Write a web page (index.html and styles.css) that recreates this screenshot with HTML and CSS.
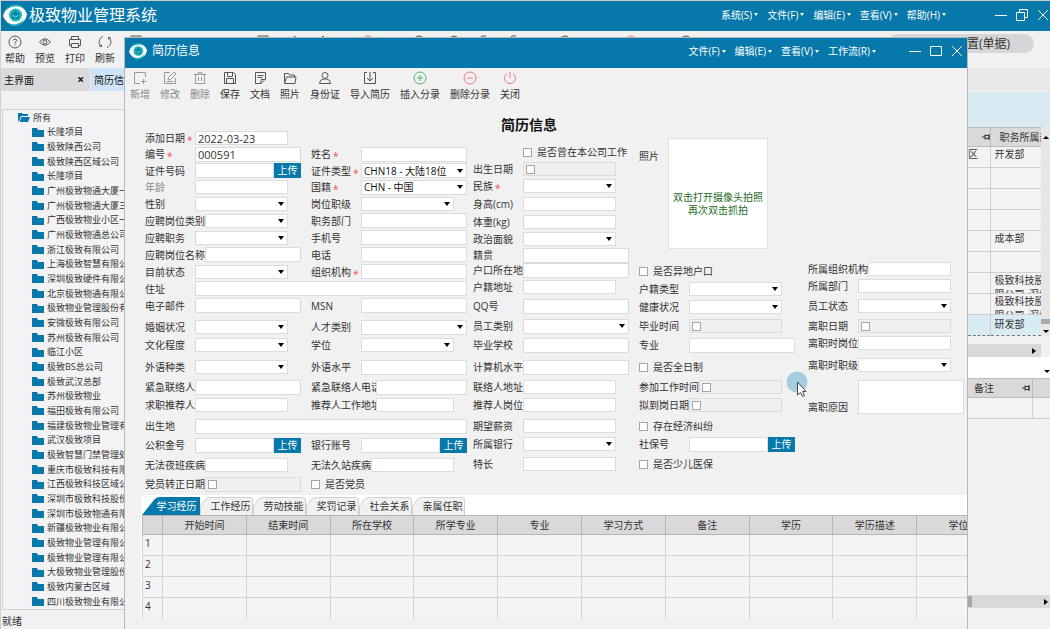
FILE: index.html
```html
<!DOCTYPE html>
<html lang="zh-CN">
<head>
<meta charset="utf-8">
<title>极致物业管理系统</title>
<link rel="stylesheet" href="styles.css">
</head>
<body>
<svg class="defs" aria-hidden="true">
  <symbol id="logo" viewBox="0 0 24 24">
    <path d="M0 13C2 6 7 2 13 2c5 0 9 4 11 9-1 7-6 11-12 11C6 22 2 18 0 13z" fill="#fff"/>
    <path d="M3 5C7 1 14 0 19 3l1 2C14 2 8 3 3 7z" fill="#1aa5ae"/>
    <path d="M5 20c6 3 12 1 16-4-2 7-11 10-16 4z" fill="#1ab4b4"/>
    <circle cx="12.500" cy="12" r="6.500" fill="#1fb9ba"/>
    <path d="M7.500 11.500l5-4.500 5 4.500h-1.500V16h-7v-4.500z" fill="#0b87ac"/>
    <path d="M10.500 12v1q2 2 4 0v-1" fill="none" stroke="#7fe0dd"/>
  </symbol>
  <symbol id="folder" viewBox="0 0 12 11"><path d="M0 1h5l1 2h6v7H0z" fill="#0678a9"/></symbol>
  <symbol id="pin" viewBox="0 0 8 6"><path d="M0 3h3M3 .5v5M3 1.500h4v3H3M7 0v6" fill="none" stroke="#333"/></symbol>
</svg>

<div class="app">
  <header class="app-bar">
    <svg class="app-logo"><use href="#logo"/></svg>
    <h1>极致物业管理系统</h1>
    <nav class="menu">
      <button>系统(S)</button><button>文件(F)</button><button>编辑(E)</button><button>查看(V)</button><button>帮助(H)</button>
    </nav>
    <div class="win-buttons app-win">
      <button aria-label="最小化"><svg viewBox="0 0 14 14"><path d="M1 7.500h12"/></svg></button>
      <button aria-label="还原"><svg viewBox="0 0 14 14"><path d="M1.500 4.500h8v8h-8zM4.500 4V1.500h8v8H10"/></svg></button>
      <button aria-label="关闭"><svg viewBox="0 0 14 14"><path d="M2 2l10 10M12 2L2 12"/></svg></button>
    </div>
  </header>

  <div class="app-tools tools">
    <button><svg viewBox="0 0 14 14"><circle cx="7" cy="7" r="6"/><path d="M5.200 5.500Q5.300 4 7 4t1.800 1.500Q8.800 6.500 7 7.300V8.500M7 9.500v1"/></svg>帮助</button>
    <button><svg viewBox="0 0 14 14"><path d="M1.500 7Q7 .5 12.500 7 7 13.500 1.500 7z"/><circle cx="7" cy="7" r="2"/></svg>预览</button>
    <button><svg viewBox="0 0 14 14"><path d="M3.500 4.500v-3h7v3M3.500 10.500h-2v-6h11v6h-2M3.500 8.500h7v4h-7z"/></svg>打印</button>
    <button><svg viewBox="0 0 14 14"><path d="M5 1.500A6 6 0 0 0 3 11.500M1.500 11.500h2v-2M9 12.500A6 6 0 0 0 11 2.500M12.500 2.500h-2v2"/></svg>刷新</button>
    <svg class="tool-strip" viewBox="5 0 620 14" fill="none" stroke="#555">
      <path d="M11 5V1h10v4M138 5V1h10v4M168 3h5l2-2v4M200 4l3-3 3 3M359 4l3-3h4M389 4l3-3h4"/>
      <g stroke="#e77"><circle cx="248" cy="7" r="6"/><circle cx="511" cy="7" r="6"/></g>
      <circle cx="299" cy="7" r="6"/><circle cx="334" cy="5" r="4"/><circle cx="445" cy="7" r="6"/><circle cx="566" cy="7" r="6"/>
    </svg>
    <div class="search">置(单据)</div>
  </div>

  <div class="app-tabs">
    <button class="app-tab">主界面<span>×</span></button>
    <button class="app-tab current">简历信息</button>
  </div>

  <div class="workspace">
    <aside class="side">
      <div class="tree">
        <div class="root"><svg viewBox="0 0 12 11"><path d="M0 1h4l1 1h5v2H3L1 9H0zM3.500 5H12l-2 5H1.500z" fill="#0678a9"/></svg>所有</div>
        <ul>
          <li><svg><use href="#folder"/></svg>长隆项目</li>
          <li><svg><use href="#folder"/></svg>极致陕西公司</li>
          <li><svg><use href="#folder"/></svg>极致陕西区域公司</li>
          <li><svg><use href="#folder"/></svg>长隆项目</li>
          <li><svg><use href="#folder"/></svg>广州极致物通大厦一</li>
          <li><svg><use href="#folder"/></svg>广州极致物通大厦三</li>
          <li><svg><use href="#folder"/></svg>广西极致物业小区一</li>
          <li><svg><use href="#folder"/></svg>广州极致物通总公司</li>
          <li><svg><use href="#folder"/></svg>浙江极致有限公司</li>
          <li><svg><use href="#folder"/></svg>上海极致智慧有限公司</li>
          <li><svg><use href="#folder"/></svg>深圳极致硬件有限公司</li>
          <li><svg><use href="#folder"/></svg>北京极致物通有限公司</li>
          <li><svg><use href="#folder"/></svg>极致物业管理股份有限公司</li>
          <li><svg><use href="#folder"/></svg>安微极致有限公司</li>
          <li><svg><use href="#folder"/></svg>苏州极致有限公司</li>
          <li><svg><use href="#folder"/></svg>临江小区</li>
          <li><svg><use href="#folder"/></svg>极致BS总公司</li>
          <li><svg><use href="#folder"/></svg>极致武汉总部</li>
          <li><svg><use href="#folder"/></svg>苏州极致物业</li>
          <li><svg><use href="#folder"/></svg>福田极致有限公司</li>
          <li><svg><use href="#folder"/></svg>福建极致物业管理有限公司</li>
          <li><svg><use href="#folder"/></svg>武汉极致项目</li>
          <li><svg><use href="#folder"/></svg>极致智慧门禁管理处</li>
          <li><svg><use href="#folder"/></svg>重庆市极致科技有限公司</li>
          <li><svg><use href="#folder"/></svg>江西极致科技区域公司</li>
          <li><svg><use href="#folder"/></svg>深圳市极致科技股份有限公司</li>
          <li><svg><use href="#folder"/></svg>深圳市极致物通有限公司</li>
          <li><svg><use href="#folder"/></svg>新疆极致物业有限公司</li>
          <li><svg><use href="#folder"/></svg>极致物业管理有限公司</li>
          <li><svg><use href="#folder"/></svg>极致物业管理有限公司</li>
          <li><svg><use href="#folder"/></svg>大极致物业管理股份有限公司</li>
          <li><svg><use href="#folder"/></svg>极致内蒙古区域</li>
          <li><svg><use href="#folder"/></svg>四川极致物业有限公司</li>
        </ul>
      </div>
      <footer class="status">就绪</footer>
    </aside>

    <section class="results">
      <div class="filter"></div>
      <div class="upper">
        <table class="list">
          <thead><tr><th class="area"><svg class="pin"><use href="#pin"/></svg></th><th>职务所属部门</th></tr></thead>
          <tbody>
            <tr><td class="area">区</td><td>开发部</td></tr>
            <tr><td></td><td></td></tr>
            <tr><td></td><td></td></tr>
            <tr><td></td><td></td></tr>
            <tr><td></td><td>成本部</td></tr>
            <tr><td></td><td></td></tr>
            <tr><td></td><td><div class="two">极致科技股份有<br>限公司_深圳总</div></td></tr>
            <tr><td></td><td><div class="two">极致科技股份有<br>限公司_深圳总</div></td></tr>
            <tr class="selected"><td></td><td>研发部</td></tr>
          </tbody>
        </table>
        <div class="vscroll"><span class="up"></span><span class="thumb"></span><span class="down"></span></div>
      </div>
      <div class="hscroll"><span class="right"></span></div>
      <div class="picker"><span class="down"></span></div>
      <table class="list notes">
        <thead><tr><th class="note">备注<svg class="pin"><use href="#pin"/></svg></th><th></th></tr></thead>
        <tbody><tr><td></td><td></td></tr></tbody>
      </table>
      <div class="hscroll last"><span class="grip"></span><span class="right"></span></div>
      <div class="bottom"></div>
    </section>
  </div>
</div>

<section class="dialog" role="dialog" aria-labelledby="dialog-title">
  <header class="dialog-bar">
    <svg class="dialog-logo"><use href="#logo"/></svg>
    <h2 id="dialog-title">简历信息</h2>
    <nav class="menu">
      <button>文件(F)</button><button>编辑(E)</button><button>查看(V)</button><button>工作流(R)</button>
    </nav>
    <div class="win-buttons">
      <button aria-label="最小化"><svg viewBox="0 0 14 14"><path d="M1 7.500h12"/></svg></button>
      <button aria-label="最大化"><svg viewBox="0 0 14 14"><path d="M1.500 2.500h11v9h-11z"/></svg></button>
      <button aria-label="关闭"><svg viewBox="0 0 14 14"><path d="M2 2l10 10M12 2L2 12"/></svg></button>
    </div>
  </header>

  <div class="tools">
    <button class="dim"><svg viewBox="0 0 14 14"><path d="M12.500 6V1.500h-11v11H7M10.500 8v5M8 10.500h5"/></svg>新增</button>
    <button class="dim"><svg viewBox="0 0 14 14"><path d="M7 1.500H1.500v11h11V7M5 9l.5-2.500 5.500-5.500 2 2-5.500 5.500zM3.500 10.500h7"/></svg>修改</button>
    <button class="dim"><svg viewBox="0 0 14 14"><path d="M1 3.500h12M5 3V1.500h4V3M2.500 3.500v9h9v-9M5.500 6v4M8.500 6v4"/></svg>删除</button>
    <button><svg viewBox="0 0 14 14"><path d="M1.500 1.500h9l2 2v9h-11zM4.500 1.500v4h5v-4M3.500 12.500v-5h7v5"/></svg>保存</button>
    <button><svg viewBox="0 0 14 14"><path d="M8 12.500H2.500v-11h10V8zM8 12.500V8.500h4M4.500 4.500h6M4.500 6.500h5"/></svg>文档</button>
    <button><svg viewBox="0 0 14 14"><path d="M1.500 12V2.500h4l1 1.500h5v2M1.500 12.500l2-6.500h9.500l-1 6.500z"/></svg>照片</button>
    <button><svg viewBox="0 0 14 14"><circle cx="7" cy="4.500" r="3"/><path d="M1.500 12.500q0-4 4-4.500h3q4 .5 4 4.500z"/></svg>身份证</button>
    <button><svg viewBox="0 0 14 14"><path d="M4 1.500H1.500v11h11v-11H10M7 1v8.500M4 7l3 3 3-3"/></svg>导入简历</button>
    <button class="green"><svg viewBox="0 0 14 14"><circle cx="7" cy="7" r="6"/><path d="M4 7h6M7 4v6"/></svg>插入分录</button>
    <button class="red"><svg viewBox="0 0 14 14"><circle cx="7" cy="7" r="6"/><path d="M4 7h6"/></svg>删除分录</button>
    <button class="red"><svg viewBox="0 0 14 14"><path d="M4 2.500a5.500 5.500 0 1 0 6 0M7 1v6"/></svg>关闭</button>
  </div>

  <h3>简历信息</h3>

  <form class="form">
    <div class="pair">
      <div class="field narrow first"><label for="a1">添加日期<b>*</b></label><input id="a1" value="2022-03-23"></div>
      <div class="field first"><label for="a2">编号<b>*</b></label><input id="a2" value="000591"></div>
      <div class="field"><label for="b2">姓名<b>*</b></label><input id="b2"></div>
      <div class="field first"><label for="a3">证件号码</label><input id="a3"><button type="button">上传</button></div>
      <div class="field"><label for="b3">证件类型<b>*</b></label><select id="b3"><option>CHN18 - 大陆18位</option></select></div>
      <div class="field narrow first"><label for="a4" class="muted">年龄</label><input id="a4"></div>
      <div class="field"><label for="b4">国籍<b>*</b></label><select id="b4"><option>CHN - 中国</option></select></div>
      <div class="field narrow first"><label for="a5">性别</label><select id="a5"></select></div>
      <div class="field narrow"><label for="b5">岗位职级</label><select id="b5"></select></div>
      <div class="field narrow first"><label for="a6">应聘岗位类别</label><select id="a6"></select></div>
      <div class="field"><label for="b6">职务部门</label><input id="b6"></div>
      <div class="field narrow first"><label for="a7">应聘职务</label><select id="a7"></select></div>
      <div class="field"><label for="b7">手机号</label><input id="b7"></div>
      <div class="field first"><label for="a8">应聘岗位名称</label><input id="a8"></div>
      <div class="field"><label for="b8">电话</label><input id="b8"></div>
      <div class="field narrow first"><label for="a9">目前状态</label><select id="a9"></select></div>
      <div class="field"><label for="b9">组织机构<b>*</b></label><input id="b9"></div>
      <div class="field full"><label for="a10">住址</label><input id="a10"></div>
      <div class="field first"><label for="a11">电子邮件</label><input id="a11"></div>
      <div class="field"><label for="b11">MSN</label><input id="b11"></div>
      <div class="field narrow first section"><label for="a12">婚姻状况</label><select id="a12"></select></div>
      <div class="field section"><label for="b12">人才类别</label><select id="b12"></select></div>
      <div class="field narrow first"><label for="a13">文化程度</label><select id="a13"></select></div>
      <div class="field narrow"><label for="b13">学位</label><select id="b13"></select></div>
      <div class="field narrow first"><label for="a14">外语种类</label><select id="a14"></select></div>
      <div class="field"><label for="b14">外语水平</label><input id="b14"></div>
      <div class="field first"><label for="a15">紧急联络人</label><input id="a15"></div>
      <div class="field"><label for="b15" class="long">紧急联络人电话</label><input id="b15"></div>
      <div class="field narrow first"><label for="a16">求职推荐人</label><input id="a16"></div>
      <div class="field narrow"><label for="b16" class="long">推荐人工作地址</label><input id="b16"></div>
      <div class="field full"><label for="a17">出生地</label><input id="a17"></div>
      <div class="field first"><label for="a18">公积金号</label><input id="a18"><button type="button">上传</button></div>
      <div class="field"><label for="b18">银行账号</label><input id="b18"><button type="button">上传</button></div>
      <div class="field narrow first"><label for="a19">无法夜班疾病</label><input id="a19"></div>
      <div class="field narrow"><label for="b19">无法久站疾病</label><input id="b19"></div>
      <div class="field first"><label for="a20">党员转正日期</label><span class="date"><input type="checkbox" id="a20"></span></div>
      <div class="check"><input type="checkbox" id="b20"><label for="b20">是否党员</label></div>
    </div>

    <div class="column personal">
      <div class="check indent"><input type="checkbox" id="c1"><label for="c1">是否曾在本公司工作</label></div>
      <div class="field narrow"><label for="c2">出生日期</label><span class="date"><input type="checkbox" id="c2"></span></div>
      <div class="field narrow"><label for="c3">民族<b>*</b></label><select id="c3"></select></div>
      <div class="field narrow"><label for="c4">身高(cm)</label><input id="c4"></div>
      <div class="field narrow"><label for="c5">体重(kg)</label><input id="c5"></div>
      <div class="field narrow"><label for="c6">政治面貌</label><select id="c6"></select></div>
      <div class="field"><label for="c7">籍贯</label><input id="c7"></div>
      <div class="field"><label for="c8">户口所在地</label><input id="c8"></div>
      <div class="field narrow"><label for="c9">户籍地址</label><input id="c9"></div>
      <div class="field"><label for="c10">QQ号</label><input id="c10"></div>
      <div class="field"><label for="c11">员工类别</label><select id="c11"></select></div>
      <div class="field"><label for="c12">毕业学校</label><input id="c12"></div>
      <div class="field"><label for="c13">计算机水平</label><input id="c13"></div>
      <div class="field narrow"><label for="c14">联络人地址</label><input id="c14"></div>
      <div class="field narrow"><label for="c15">推荐人岗位</label><input id="c15"></div>
      <div class="field narrow"><label for="c16">期望薪资</label><input id="c16"></div>
      <div class="field narrow"><label for="c17">所属银行</label><select id="c17"></select></div>
      <div class="field narrow"><label for="c18">特长</label><input id="c18"></div>
    </div>

    <div class="column status-col">
      <div class="photo"><span>照片</span><div class="photo-box">双击打开摄像头拍照<br>再次双击抓拍</div></div>
      <div class="check"><input type="checkbox" id="d1"><label for="d1">是否异地户口</label></div>
      <div class="field narrow"><label for="d2">户籍类型</label><select id="d2"></select></div>
      <div class="field narrow"><label for="d3">健康状况</label><select id="d3"></select></div>
      <div class="field narrow"><label for="d4">毕业时间</label><span class="date"><input type="checkbox" id="d4"></span></div>
      <div class="field"><label for="d5">专业</label><input id="d5"></div>
      <div class="check"><input type="checkbox" id="d6"><label for="d6">是否全日制</label></div>
      <div class="field narrow"><label for="d7">参加工作时间</label><span class="date"><input type="checkbox" id="d7"></span></div>
      <div class="field narrow"><label for="d8">拟到岗日期</label><span class="date"><input type="checkbox" id="d8"></span></div>
      <div class="check"><input type="checkbox" id="d9"><label for="d9">存在经济纠纷</label></div>
      <div class="field"><label for="d10">社保号</label><input id="d10"><button type="button">上传</button></div>
      <div class="check"><input type="checkbox" id="d11"><label for="d11">是否少儿医保</label></div>
    </div>

    <div class="column leave">
      <div class="field narrow"><label for="e1">所属组织机构</label><input id="e1"></div>
      <div class="field narrow"><label for="e2">所属部门</label><input id="e2"></div>
      <div class="field narrow"><label for="e3">员工状态</label><select id="e3"></select></div>
      <div class="field narrow"><label for="e4">离职日期</label><span class="date"><input type="checkbox" id="e4"></span></div>
      <div class="field narrow"><label for="e5">离职时岗位</label><input id="e5"></div>
      <div class="field narrow"><label for="e6">离职时职级</label><select id="e6"></select></div>
      <div class="field reason"><label for="e7">离职原因</label><textarea id="e7"></textarea></div>
    </div>
  </form>

  <div class="details">
    <div class="tabs" role="tablist">
      <button role="tab" aria-selected="true"><svg viewBox="0 0 58 18" preserveAspectRatio="none"><path d="M0 18L12 3Q14 0 18 0H58V18z"/></svg><span>学习经历</span></button>
      <button role="tab"><svg viewBox="0 0 54 18" preserveAspectRatio="none"><path d="M.5 18V9L6 2Q8 .5 10 .5H51Q53.500 .5 53.500 3V18"/></svg><span>工作经历</span></button>
      <button role="tab"><svg viewBox="0 0 54 18" preserveAspectRatio="none"><path d="M.5 18V9L6 2Q8 .5 10 .5H51Q53.500 .5 53.500 3V18"/></svg><span>劳动技能</span></button>
      <button role="tab"><svg viewBox="0 0 54 18" preserveAspectRatio="none"><path d="M.5 18V9L6 2Q8 .5 10 .5H51Q53.500 .5 53.500 3V18"/></svg><span>奖罚记录</span></button>
      <button role="tab"><svg viewBox="0 0 54 18" preserveAspectRatio="none"><path d="M.5 18V9L6 2Q8 .5 10 .5H51Q53.500 .5 53.500 3V18"/></svg><span>社会关系</span></button>
      <button role="tab"><svg viewBox="0 0 54 18" preserveAspectRatio="none"><path d="M.5 18V9L6 2Q8 .5 10 .5H51Q53.500 .5 53.500 3V18"/></svg><span>亲属任职</span></button>
    </div>
    <table class="grid">
      <thead><tr><th class="num"></th><th>开始时间</th><th>结束时间</th><th>所在学校</th><th>所学专业</th><th>专业</th><th>学习方式</th><th>备注</th><th>学历</th><th>学历描述</th><th>学位</th></tr></thead>
      <tbody>
        <tr><td>1</td><td></td><td></td><td></td><td></td><td></td><td></td><td></td><td></td><td></td><td></td></tr>
        <tr><td>2</td><td></td><td></td><td></td><td></td><td></td><td></td><td></td><td></td><td></td><td></td></tr>
        <tr><td>3</td><td></td><td></td><td></td><td></td><td></td><td></td><td></td><td></td><td></td><td></td></tr>
        <tr><td>4</td><td></td><td></td><td></td><td></td><td></td><td></td><td></td><td></td><td></td><td></td></tr>
      </tbody>
    </table>
  </div>

  <svg class="pointer" viewBox="0 0 24 26" aria-hidden="true">
    <circle cx="11" cy="11" r="10.500" fill="#a5cddd"/>
    <path d="M11.500 11v13l3-2.500 2 4 2-1-2-4h3.500z" fill="#fff" stroke="#445"/>
  </svg>
</section>
</body>
</html>
```

FILE: styles.css
```css
* { box-sizing: border-box; }
body {
  margin: 0;
  overflow: hidden;
  background: #f1f1f1;
  color: #333;
  font: 10px/14px "Open Sans", "Noto Sans CJK SC", sans-serif;
}
h1, h2, h3, ul { margin: 0; padding: 0; font-weight: 400; }
ul { list-style: none; }
button, input, select, textarea { font: inherit; color: inherit; margin: 0; padding: 0; border: 0; border-radius: 0; }
button { background: none; }
svg { display: block; flex: none; }
.defs { position: absolute; width: 0; height: 0; }

/* application window */
.app {
  display: flex;
  flex-direction: column;
  height: 100vh;
  border-top: 1px solid #c9c9c9;
  border-left: 1px solid #d0d0d0;
}
.app-bar, .dialog-bar {
  display: flex;
  align-items: center;
  flex: none;
  height: 30px;
  background: #0678a9;
  color: #fff;
}
.app-bar { padding: 0 0 3px 2px; }
.dialog-bar { padding: 0 3px 4px 4px; }
.app-logo { width: 24px; height: 24px; }
.app-bar h1 { margin-left: 2px; font-size: 16px; line-height: 24px; }
.menu { display: flex; gap: 9px; margin-left: auto; }
.menu button { display: flex; align-items: center; gap: 2px; white-space: nowrap; }
.menu button::after { content: ""; border: 2px solid transparent; border-top: 3px solid #fff; border-bottom: 0; }
.win-buttons { display: flex; gap: 7px; margin-left: 32px; }
.win-buttons svg { width: 14px; height: 14px; fill: none; stroke: #fff; }
.app-win { margin-left: 48px; }

.tools { display: flex; gap: 10px; flex: none; }
.tools button { display: flex; flex-direction: column; align-items: center; gap: 2px; height: 30px; white-space: nowrap; }
.tools button svg { width: 14px; height: 14px; fill: none; stroke: #555; }
.app-tools { height: 37px; padding: 4px 16px 0 4px; overflow: hidden; }
.tool-strip { width: 620px; height: 14px; }
.search {
  width: 146px;
  height: 19px;
  margin: -1px 0 0 auto;
  padding-right: 24px;
  border-radius: 10px;
  background: #d6d6d6;
  font-size: 12px;
  line-height: 19px;
  text-align: right;
}
.app-tabs { display: flex; flex: none; gap: 1px; height: 23px; background: #e9e9e9; }
.app-tab { display: flex; align-items: center; justify-content: space-between; width: 89px; padding: 0 6px 0 3px; background: #dadada; color: #111; }
.app-tab span { font-size: 12px; font-weight: 700; }
.app-tab.current { background: #cde4f8; }

.workspace { display: flex; flex: 1; min-height: 0; justify-content: space-between; }
.side { display: flex; flex-direction: column; width: 123px; padding: 18px 0 0 1px; }
.tree { display: flex; flex-direction: column; flex: 1; min-height: 0; border: 1px solid #d3d3d3; border-right: 0; background: #f3f3f5; overflow: hidden; font-size: 9px; white-space: nowrap; }
.tree svg { width: 12px; height: 11px; }
.root { display: flex; align-items: center; gap: 3px; height: 15px; padding-left: 15px; }
.tree ul { display: grid; flex: 1; grid-auto-rows: 1fr; min-height: 0; }
.tree li { display: flex; align-items: center; gap: 3px; min-height: 0; padding-left: 29px; }
.status { height: 19px; padding-top: 4px; }

.results { display: flex; flex-direction: column; width: 82px; }
.filter { flex: none; height: 35px; margin-top: 1px; background: #d8e9f1; }
.upper { display: flex; }
.list { table-layout: fixed; width: 73px; border-collapse: collapse; background: #f3f3f5; white-space: nowrap; }
.list th { height: 19px; padding: 0 0 0 9px; border: 1px solid #bcbcbc; border-left: 0; background: #d9d9d9; font-weight: 400; text-align: left; overflow: hidden; }
.list th:last-child, .list td:last-child { border-right: 0; }
.list .area { width: 22px; padding-left: 0; }
.list td { height: 21px; padding: 0 0 0 4px; border: 1px solid #cfcfcf; border-left: 0; line-height: 14px; vertical-align: top; overflow: hidden; }
.pin { width: 8px; height: 6px; margin-left: auto; }
.two { height: 20px; overflow: hidden; }
.list .selected td { padding-top: 2px; border-top: 1px dashed #777; border-bottom: 1px dashed #777; background: #d9ebf3; }
.vscroll { display: flex; flex-direction: column; align-items: center; flex: 1; padding: 9px 0 3px; background: #e6e6e6; }
.vscroll .thumb { width: 9px; height: 5px; margin-top: auto; background: #a9a9a9; }
.vscroll .down { margin-top: 6px; }
.up { border: 3px solid transparent; border-bottom: 3px solid #000; border-top: 0; }
.down { border: 3px solid transparent; border-top: 3px solid #000; border-bottom: 0; }
.right { margin-left: auto; border: 3px solid transparent; border-left: 4px solid #000; border-right: 0; }
.hscroll { display: flex; align-items: center; flex: none; width: 73px; height: 13px; padding-right: 5px; margin-top: 8px; background: #d9d9d9; }
.picker { display: flex; justify-content: flex-end; align-items: center; flex: none; height: 21px; padding-top: 7px; background: #fff; }
.notes { width: 82px; }
.notes .note { width: 64px; padding: 0 2px 0 6px; }
.note .pin { float: right; margin-top: 4px; }
.hscroll.last { width: auto; margin-top: auto; padding-right: 2px; }
.grip { width: 4px; height: 11px; background: #a5a5a5; }
.bottom { flex: none; height: 21px; }

/* resume dialog */
.dialog {
  position: absolute;
  top: 37px;
  right: 82px;
  bottom: 0;
  left: 124px;
  display: flex;
  flex-direction: column;
  overflow: hidden;
  border: 1px solid #b3b8bb;
  border-bottom: 0;
  background: #f1f1f1;
}
.dialog-logo { width: 18px; height: 18px; }
.dialog-bar h2 { margin-left: 5px; font-size: 12px; line-height: 18px; }
.dialog .tools { padding: 3px 0 0 5px; }
.tools .dim { color: #888; }
.tools .dim svg { stroke: #999; }
.tools .green svg { stroke: #4fb869; }
.tools .red svg { stroke: #ef7b80; }
.dialog h3 { margin-top: 15px; padding-right: 34px; color: #111; font-size: 14px; font-weight: 700; line-height: 18px; text-align: center; }

.form { display: grid; grid-template-columns: 328px 166px 169px 1fr; align-items: start; flex: none; margin-top: -4px; padding-left: 20px; }
.pair {
  display: grid;
  grid-template-columns: 166px 162px;
  grid-template-rows: 16px 16px 17px 16px 17px 17px 17px 17px 17px 17px 17px 21px 20px 24px 16px 20px 22px 16px 24px 14px;
  align-items: center;
}
.first { grid-column: 1; }
.full { grid-column: 1 / 3; }
.section { margin-top: 5px; }
.column { display: grid; align-items: center; }
.personal { padding-top: 14px; grid-template-rows: 16px 18px 16px 20px 16px 18px 14px 16px 18px 20px 20px 18px 26px 14px 22px 20px 16px 24px; }
.status-col { grid-template-rows: 132px 18px 18px 18px 20px 18px 26px 14px 22px 20px 16px 24px; }
.leave { padding-top: 132px; grid-template-rows: 14px 20px 20px 20px 14px 30px 34px; }

.field { display: flex; align-items: center; width: 156px; height: 15px; }
.field.narrow { width: 143px; height: 14px; }
.field.full { width: 322px; }
.field label { flex: none; min-width: 50px; white-space: nowrap; }
.field label b { margin-left: 2px; color: #f0504f; font-weight: 400; vertical-align: -2px; line-height: 10px; }
.field label.muted { color: #888; }
.field label.long { width: 65px; overflow: hidden; }
.field input:not([type="checkbox"]), .field select, .field textarea {
  flex: 1;
  width: 0;
  min-width: 0;
  height: 100%;
  border: 1px solid #dadcdd;
  background: #fff;
  line-height: 12px;
}
.field input:not([type="checkbox"]) { padding-left: 2px; font-family: "Open Sans", sans-serif; font-size: 11px; }
.field select {
  padding-left: 2px;
  appearance: none;
  background: #fff url("data:image/svg+xml,%3Csvg xmlns='http://www.w3.org/2000/svg' width='6' height='4'%3E%3Cpath d='M0 0h6L3 4z'/%3E%3C/svg%3E") no-repeat right 3px center;
  color: #111;
}
.field button { width: 27px; height: 15px; background: #0678a9; color: #fff; line-height: 15px; }
.date { display: flex; align-items: center; flex: 1; height: 100%; padding-left: 2px; border: 1px solid #dadcdd; background: #f0f0f0; }
input[type="checkbox"] { flex: none; appearance: none; width: 9px; height: 9px; border: 1px solid #a5a5a5; background: #fff; }
.check { display: flex; align-items: center; gap: 5px; white-space: nowrap; }
.indent { margin-left: 50px; }
.photo { display: flex; height: 132px; padding-top: 8px; }
.photo span { width: 29px; padding-top: 11px; }
.photo-box { width: 100px; height: 111px; padding-top: 52px; border: 1px solid #e2e2e2; background: #fff; color: #1e6b1e; line-height: 13px; text-align: center; white-space: nowrap; }
.field.reason { height: 34px; }
.reason label { align-self: flex-end; }
.reason textarea { resize: none; }

.details { flex: none; margin: 4px 0 0 16px; overflow: hidden; background: #fff; }
.tabs { display: flex; height: 20px; padding: 2px 0 0 1px; }
.tabs button { position: relative; width: 53px; height: 18px; padding-left: 8px; }
.tabs svg { position: absolute; inset: 0; width: 100%; height: 100%; fill: #f1f1f1; stroke: #cfcfcf; }
.tabs span { position: relative; }
.tabs [aria-selected] { width: 58px; color: #fff; padding-left: 11px; }
.tabs [aria-selected] svg { fill: #0678a9; stroke: none; }
.grid { table-layout: fixed; width: 859px; margin-left: 1px; border-collapse: collapse; background: #f3f3f5; }
.grid th { height: 19px; padding: 0; border: 1px solid #b5b5b5; background: #d9d9d9; font-weight: 400; }
.grid th.num { width: 20px; }
.grid td { height: 21px; padding: 0 0 4px 2px; border: 1px solid #d3d3d5; }
.grid tr:last-child td { border-bottom: 0; }
.pointer { position: absolute; top: 333px; left: 661px; width: 24px; height: 26px; }
```
